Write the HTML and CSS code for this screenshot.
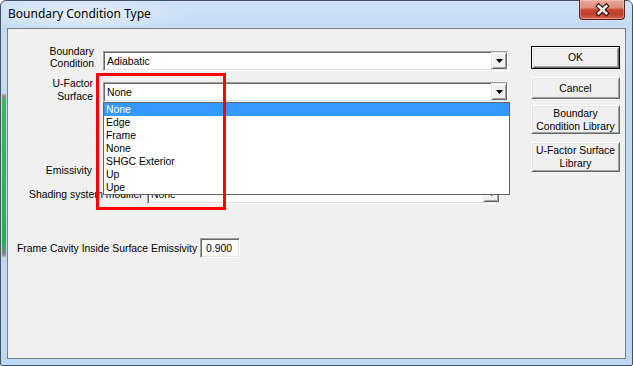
FILE: index.html
```html
<!DOCTYPE html>
<html lang="en">
<head>
<meta charset="utf-8">
<title>Boundary Condition Type</title>
<link rel="stylesheet" href="styles.css">
</head>
<body>
<div class="window">
  <div class="titlebar">
    <span class="title">Boundary Condition Type</span>
    <button class="close" type="button" aria-label="Close">
      <svg width="46" height="19" viewBox="0 0 46 19">
        <path d="M19.5 6 L27.5 13.5 M27.5 6 L19.5 13.5" stroke="#3a1410" stroke-width="5" stroke-linecap="square" fill="none"/>
        <path d="M19.5 6 L27.5 13.5 M27.5 6 L19.5 13.5" stroke="#ffffff" stroke-width="2.6" stroke-linecap="square" fill="none"/>
      </svg>
    </button>
  </div>
  <div class="client">
    <div class="form">
      <div class="row row-bc">
        <label class="lbl lbl-bc">Boundary<br>Condition</label>
        <div class="combo combo-wide">
          <span class="value">Adiabatic</span>
          <span class="drop"><svg width="7" height="4" viewBox="0 0 7 4"><polygon points="0,0 7,0 3.5,4" fill="#000"/></svg></span>
        </div>
      </div>
      <div class="row row-uf">
        <label class="lbl lbl-uf">U-Factor<br>Surface</label>
        <div class="combo combo-wide">
          <span class="value">None</span>
          <span class="drop"><svg width="7" height="4" viewBox="0 0 7 4"><polygon points="0,0 7,0 3.5,4" fill="#000"/></svg></span>
          <ul class="list">
            <li class="sel">None</li>
            <li>Edge</li>
            <li>Frame</li>
            <li>None</li>
            <li>SHGC Exterior</li>
            <li>Up</li>
            <li>Upe</li>
          </ul>
        </div>
      </div>
      <div class="row row-em">
        <label class="lbl lbl-em">Emissivity</label>
        <div class="field field-em"></div>
      </div>
      <div class="row row-sh">
        <label class="lbl-sh">Shading system modifier</label>
        <div class="combo combo-sh">
          <span class="value">None</span>
          <span class="drop"><svg width="7" height="4" viewBox="0 0 7 4"><polygon points="0,0 7,0 3.5,4" fill="#000"/></svg></span>
        </div>
      </div>
      <div class="row row-fc">
        <label class="lbl-fc">Frame Cavity Inside Surface Emissivity</label>
        <div class="field field-fc">0.900</div>
      </div>
      <div class="highlight"></div>
    </div>
    <div class="buttons">
      <button class="btn btn-ok" type="button">OK</button>
      <button class="btn btn-cancel" type="button">Cancel</button>
      <button class="btn btn-bcl" type="button">Boundary<br>Condition Library</button>
      <button class="btn btn-ufl" type="button">U-Factor Surface<br>Library</button>
    </div>
  </div>
</div>
</body>
</html>
```
FILE: styles.css
```css
* { box-sizing: border-box; }
html, body { margin: 0; padding: 0; }
body {
  width: 633px;
  height: 366px;
  overflow: hidden;
  background: #ffffff;
  font-family: "Liberation Sans", Arial, sans-serif;
  font-size: 10.4px;
  color: #000;
}
.window {
  width: 633px;
  height: 366px;
  border: 1px solid #46525f;
  border-radius: 6px 6px 2px 2px;
  background:
    linear-gradient(to bottom, transparent 92px, #8c8c8c 95px, #39b85a 100px, #22b14c 240px, #5d9a68 250px, #8a8a8a 254px, transparent 257px) 1px 0 / 4px 100% no-repeat,
    linear-gradient(to bottom, #cfe2f7 0px, #c3dbf4 30px, #bdd8f5 100%);
  display: flex;
  flex-direction: column;
}
.titlebar {
  height: 27px;
  display: flex;
  align-items: flex-start;
  padding-left: 7px;
  background: radial-gradient(ellipse 110px 16px at 80px 14px, rgba(255,255,255,0.55), rgba(255,255,255,0) 100%);
}
.title {
  margin-top: 5px;
  line-height: 16px;
  font-family: "Noto Sans", "Open Sans", sans-serif;
  font-size: 12px;
  color: #000;
  white-space: nowrap;
}
.close {
  margin-left: auto;
  margin-right: 7px;
  margin-top: -1px;
  width: 46px;
  height: 20px;
  padding: 0;
  border: 1px solid #5e231b;
  border-top: 0;
  border-radius: 0 0 4px 4px;
  background: linear-gradient(to bottom, #e8aa9c 0%, #dc8d7b 40%, #c9472f 52%, #c13f29 75%, #d36d56 100%);
  box-shadow: inset 0 0 0 1px rgba(255,220,210,0.35);
  display: flex;
  align-items: center;
  justify-content: center;
}
.close svg { display: block; }
.client {
  margin-left: 6px;
  width: 619px;
  height: 331px;
  border: 1px solid #7b8189;
  background: #f0f0f0;
  display: flex;
}
.form {
  flex: 1;
  position: relative;
  padding-top: 22px;
}
.row { display: flex; height: 20px; }
.lbl {
  flex: none;
  width: 86px;
  margin-right: 9px;
  text-align: right;
  white-space: nowrap;
}
.lbl-bc { line-height: 12px; margin-top: -5px; }
.lbl-uf { line-height: 13px; margin-top: -5px; padding-right: 1px; }
.lbl-em { align-self: center; line-height: 13px; padding-right: 2px; }
.row-uf { margin-top: 11px; }
.row-em { margin-top: 58px; }
.row-sh { margin-top: 4px; padding-left: 21px; align-items: center; }
.row-fc { margin-top: 34px; padding-left: 9px; align-items: center; }
.lbl-sh { flex: none; width: 118px; white-space: nowrap; line-height: 13px; }
.lbl-fc { flex: none; width: 183px; white-space: nowrap; line-height: 13px; }

.combo, .field {
  position: relative;
  height: 20px;
  background: #ffffff;
  border: 1px solid;
  border-color: #a0a0a0 #ffffff #ffffff #a0a0a0;
  box-shadow: inset 1px 1px 0 #696969, inset -1px -1px 0 #e3e3e3;
  display: flex;
  align-items: center;
}
.combo-wide { width: 405px; }
.combo-sh { width: 353px; }
.value { padding-left: 3px; line-height: 13px; white-space: nowrap; }
.drop {
  margin-left: auto;
  align-self: stretch;
  width: 16px;
  margin-bottom: 1px;
  background: #f0f0f0;
  border: 1px solid;
  border-color: #e3e3e3 #696969 #696969 #e3e3e3;
  box-shadow: inset 1px 1px 0 #ffffff, inset -1px -1px 0 #a0a0a0;
  display: flex;
  align-items: center;
  justify-content: center;
}
.drop svg { display: block; margin-top: 1px; }
.field-em { width: 60px; }
.field-fc { width: 40px; padding-left: 5px; line-height: 13px; }

.list {
  position: absolute;
  z-index: 2;
  left: -1px;
  top: 19px;
  width: 407px;
  margin: 0;
  padding: 0;
  list-style: none;
  background: #ffffff;
  border: 1px solid #646464;
}
.list li {
  height: 13px;
  line-height: 13px;
  padding-left: 2px;
  white-space: nowrap;
}
.list li.sel { background: #3399ff; color: #ffffff; }

.highlight {
  position: absolute;
  z-index: 3;
  left: 88px;
  top: 44px;
  width: 130px;
  height: 137px;
  border: 3px solid #ff0000;
}

.buttons {
  flex: none;
  width: 89px;
  margin-top: 17px;
  margin-right: 5px;
  display: flex;
  flex-direction: column;
}
.btn {
  font-family: "Liberation Sans", Arial, sans-serif;
  font-size: 10.4px;
  line-height: 13px;
  color: #000;
  padding: 0;
  background: #f0f0f0;
  border: 1px solid;
  border-color: #ffffff #696969 #696969 #ffffff;
  box-shadow: inset 1px 1px 0 #e3e3e3, inset -1px -1px 0 #a0a0a0;
  text-align: center;
}
.btn-ok {
  height: 23px;
  border: 1px solid #000;
  box-shadow: inset 1px 1px 0 #ffffff, inset -1px -1px 0 #696969, inset 2px 2px 0 #e3e3e3, inset -2px -2px 0 #a0a0a0;
}
.btn-cancel { height: 22px; margin-top: 8px; }
.btn-bcl { height: 29px; margin-top: 6px; }
.btn-ufl { height: 30px; margin-top: 8px; }
```
